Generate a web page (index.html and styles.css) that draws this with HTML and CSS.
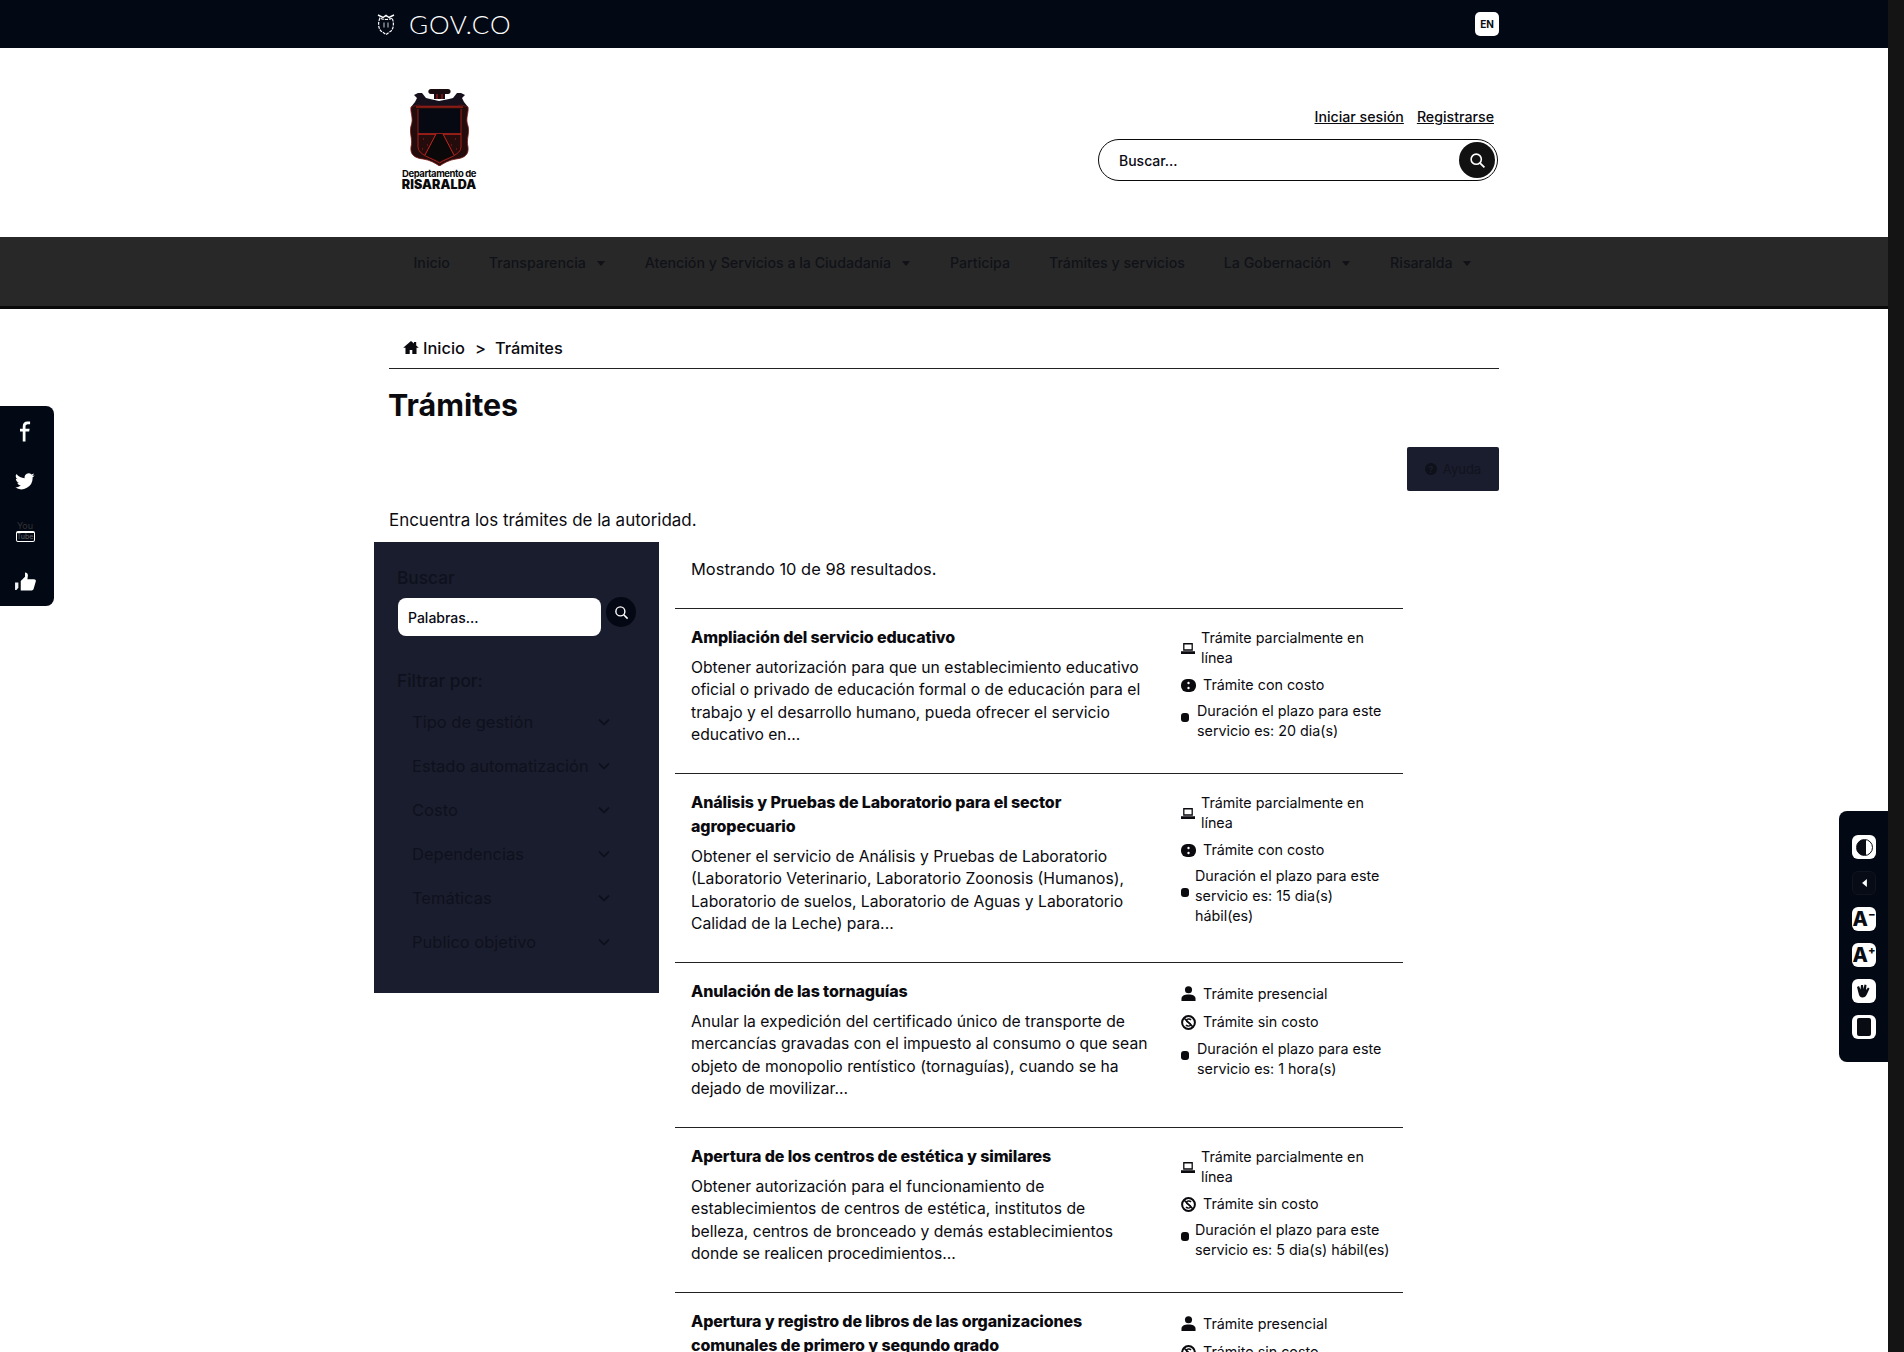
FILE: index.html
```html
<!DOCTYPE html>
<html lang="es">
<head>
    <meta charset="UTF-8" />
    <title>Trámites</title>
    <link rel="stylesheet" href="styles.css">
</head>
<body>
    <svg class="sprite" xmlns="http://www.w3.org/2000/svg">
        <symbol id="i-search" viewBox="0 0 16 16"><circle cx="6.8" cy="6.8" r="4.8" fill="none" stroke="currentColor" stroke-width="1.5"/><path d="M10.4 10.4 14.5 14.5" stroke="currentColor" stroke-width="1.7"/></symbol>
        <symbol id="i-chevron" viewBox="0 0 12 8"><path d="M1 1.5 6 6.5 11 1.5" fill="none" stroke="currentColor" stroke-width="1.8"/></symbol>
        <symbol id="i-caret" viewBox="0 0 10 6"><path d="M0 0h10L5 6z" fill="currentColor"/></symbol>
        <symbol id="i-laptop" viewBox="0 0 13 10"><path d="M2 0h9v7H2zM3.2 1.2v4.6h6.6V1.2zM0 7.6h13V10H0z" fill="currentColor" fill-rule="evenodd"/></symbol>
        <symbol id="i-cost" viewBox="0 0 15 13"><rect width="15" height="13" rx="6" fill="currentColor"/><circle cx="7.5" cy="4" r="1.2" fill="#fff"/><circle cx="7.5" cy="9" r="1.2" fill="#fff"/></symbol>
        <symbol id="i-nocost" viewBox="0 0 15 15"><circle cx="7.5" cy="7.5" r="6.4" fill="none" stroke="currentColor" stroke-width="2"/><path d="M3 3 12 12" stroke="currentColor" stroke-width="1.6"/><path d="M10 5C9 3.6 5.4 3.6 5.4 5.6S9.8 7.6 9.8 9.6 6 11.4 5 10" fill="none" stroke="currentColor" stroke-width="1.4"/></symbol>
        <symbol id="i-person" viewBox="0 0 15 16"><circle cx="7.5" cy="4" r="3.8" fill="currentColor"/><path d="M0 16v-2.500C0 10.500 3 9 7.500 9S15 10.500 15 13.500V16z" fill="currentColor"/></symbol>
        <symbol id="i-clock" viewBox="0 0 8 9"><rect width="8" height="9" rx="3" fill="currentColor"/></symbol>
    </svg>

    <div class="page">
        <div class="govbar">
            <div class="wrap govbar-inner">
                <a class="gov-logo" href="#">
                    <svg class="gov-shield" viewBox="0 0 18 22" fill="none" stroke="#fff">
                        <path d="M3 5C1 9 1 15 4 18L9 21.500 14 18C17 15 17 9 15 5 12 7 6 7 3 5z" stroke-width="1.200" stroke-dasharray="3 1"/>
                        <path d="M1 2 6 4.500 9 2.500 12 4.500 17 2" stroke-width="1.500"/>
                        <path d="M7 9.500v5M11 9.500v5" stroke-width=".8"/>
                    </svg>
                    <span class="gov-name">GOV.CO</span>
                </a>
                <a class="lang" href="#">EN</a>
            </div>
        </div>

        <header class="site-head">
            <div class="wrap site-head-inner">
                <a class="brand" href="#">
                    <svg class="brand-shield" viewBox="0 0 59 77">
                        <path d="M21 0h17c3.500 0 3.500 5 0 5h-3v5H24V5h-3c-3.500 0-3.500-5 0-5z" fill="#1a0d10"/>
                        <path d="M27 5v5M32 5v5" stroke="#b3201c" stroke-width="1.100"/>
                        <path d="M4 6 8 4 12 4 16 9 20 10 29 12 39 10 43 9 47 4 51 4 55 6 52 9 54 13 58 18H1L5 13 7 9z" fill="#15101c"/>
                        <path d="M1 18C5 17 8 15 11 17H48C51 15 54 17 58 18 59 24 55 29 58 37 60 44 56 50 58 58 59 66 54 69 46 70 39 71 34 74 29.500 77 25 74 20 71 13 70 5 69 0 66 1 58 3 50-1 44 1 37 4 29 0 24 1 18z" fill="#240c0c" stroke="#7a1814" stroke-width=".8"/>
                        <path d="M8 20H51V45H8z" fill="#070912"/>
                        <path d="M8 20V45H51V20" fill="none" stroke="#a81f1a" stroke-width=".9"/>
                        <path d="M6 18 53 18M8 45H51" stroke="#d0281f" stroke-width="1.100"/>
                        <path d="M8 45V58C8 66 22 69 29.500 74 37 69 51 66 51 58V45" fill="none" stroke="#a81f1a" stroke-width="1"/>
                        <path d="M26 45H33L44 66 29.500 72 15 66z" fill="#0a0808"/>
                        <path d="M26 45 15 66M33 45 44 66" stroke="#c4261f" stroke-width="1"/>
                        <path d="M13 50h1M17 56h1M45 50h1M41 56h1M12 60h1M46 60h1" stroke="#a81f1a" stroke-width="1.200"/>
                    </svg>
                    <span class="brand-small">Departamento de</span>
                    <span class="brand-big">RISARALDA</span>
                </a>
                <div class="head-tools">
                    <div class="head-links">
                        <a href="#">Iniciar sesión</a>
                        <a href="#">Registrarse</a>
                    </div>
                    <form class="head-search">
                        <input type="text" placeholder="Buscar..." />
                        <button type="button"><svg><use href="#i-search"/></svg></button>
                    </form>
                </div>
            </div>
        </header>

        <nav class="mainnav">
            <ul class="wrap mainnav-list">
                <li>Inicio</li>
                <li>Transparencia <svg><use href="#i-caret"/></svg></li>
                <li>Atención y Servicios a la Ciudadanía <svg><use href="#i-caret"/></svg></li>
                <li>Participa</li>
                <li>Trámites y servicios</li>
                <li>La Gobernación <svg><use href="#i-caret"/></svg></li>
                <li>Risaralda <svg><use href="#i-caret"/></svg></li>
            </ul>
        </nav>

        <main class="wrap">
            <div class="crumbs">
                <svg viewBox="0 0 24 20"><path d="M12 0 0 10.500h3.500V20H10v-6h4v6h6.500v-9.500H24L20 7V1.500h-3.500v2.500z" fill="currentColor"/></svg>
                <a href="#">Inicio</a>
                <span class="crumb-sep">&gt;</span>
                <span>Trámites</span>
            </div>
            <h1>Trámites</h1>
            <div class="help-row">
                <a class="help-btn" href="#"><span class="help-mark">?</span> Ayuda</a>
            </div>
            <p class="intro">Encuentra los trámites de la autoridad.</p>

            <div class="content">
                <aside class="filters">
                    <div class="filters-title">Buscar</div>
                    <div class="filters-search">
                        <input type="text" placeholder="Palabras..." />
                        <button type="button"><svg><use href="#i-search"/></svg></button>
                    </div>
                    <div class="filters-title filters-by">Filtrar por:</div>
                    <ul class="filter-list">
                        <li>Tipo de gestión <svg><use href="#i-chevron"/></svg></li>
                        <li>Estado automatización <svg><use href="#i-chevron"/></svg></li>
                        <li>Costo <svg><use href="#i-chevron"/></svg></li>
                        <li>Dependencias <svg><use href="#i-chevron"/></svg></li>
                        <li>Temáticas <svg><use href="#i-chevron"/></svg></li>
                        <li>Publico objetivo <svg><use href="#i-chevron"/></svg></li>
                    </ul>
                </aside>

                <section class="results">
                    <p class="results-count">Mostrando 10 de 98 resultados.</p>

                    <article class="item">
                        <div class="item-main">
                            <h3>Ampliación del servicio educativo</h3>
                            <p>Obtener autorización para que un establecimiento educativo<br>oficial o privado de educación formal o de educación para el<br>trabajo y el desarrollo humano, pueda ofrecer el servicio<br>educativo en...</p>
                        </div>
                        <ul class="item-meta">
                            <li class="m-online"><svg><use href="#i-laptop"/></svg><span>Trámite parcialmente en<br>línea</span></li>
                            <li class="m-cost"><svg><use href="#i-cost"/></svg><span>Trámite con costo</span></li>
                            <li class="m-time"><svg><use href="#i-clock"/></svg><span>Duración el plazo para este<br>servicio es: 20 dia(s)</span></li>
                        </ul>
                    </article>

                    <article class="item">
                        <div class="item-main">
                            <h3>Análisis y Pruebas de Laboratorio para el sector<br>agropecuario</h3>
                            <p>Obtener el servicio de Análisis y Pruebas de Laboratorio<br>(Laboratorio Veterinario, Laboratorio Zoonosis (Humanos),<br>Laboratorio de suelos, Laboratorio de Aguas y Laboratorio<br>Calidad de la Leche) para...</p>
                        </div>
                        <ul class="item-meta">
                            <li class="m-online"><svg><use href="#i-laptop"/></svg><span>Trámite parcialmente en<br>línea</span></li>
                            <li class="m-cost"><svg><use href="#i-cost"/></svg><span>Trámite con costo</span></li>
                            <li class="m-time m-time-long"><svg><use href="#i-clock"/></svg><span>Duración el plazo para este<br>servicio es: 15 dia(s)<br>hábil(es)</span></li>
                        </ul>
                    </article>

                    <article class="item">
                        <div class="item-main">
                            <h3>Anulación de las tornaguías</h3>
                            <p>Anular la expedición del certificado único de transporte de<br>mercancías gravadas con el impuesto al consumo o que sean<br>objeto de monopolio rentístico (tornaguías), cuando se ha<br>dejado de movilizar...</p>
                        </div>
                        <ul class="item-meta">
                            <li class="m-person"><svg><use href="#i-person"/></svg><span>Trámite presencial</span></li>
                            <li class="m-cost"><svg><use href="#i-nocost"/></svg><span>Trámite sin costo</span></li>
                            <li class="m-time"><svg><use href="#i-clock"/></svg><span>Duración el plazo para este<br>servicio es: 1 hora(s)</span></li>
                        </ul>
                    </article>

                    <article class="item">
                        <div class="item-main">
                            <h3>Apertura de los centros de estética y similares</h3>
                            <p>Obtener autorización para el funcionamiento de<br>establecimientos de centros de estética, institutos de<br>belleza, centros de bronceado y demás establecimientos<br>donde se realicen procedimientos...</p>
                        </div>
                        <ul class="item-meta">
                            <li class="m-online"><svg><use href="#i-laptop"/></svg><span>Trámite parcialmente en<br>línea</span></li>
                            <li class="m-cost"><svg><use href="#i-nocost"/></svg><span>Trámite sin costo</span></li>
                            <li class="m-time m-time-long"><svg><use href="#i-clock"/></svg><span>Duración el plazo para este<br>servicio es: 5 dia(s) hábil(es)</span></li>
                        </ul>
                    </article>

                    <article class="item">
                        <div class="item-main">
                            <h3>Apertura y registro de libros de las organizaciones<br>comunales de primero y segundo grado</h3>
                        </div>
                        <ul class="item-meta">
                            <li class="m-person"><svg><use href="#i-person"/></svg><span>Trámite presencial</span></li>
                            <li class="m-cost"><svg><use href="#i-nocost"/></svg><span>Trámite sin costo</span></li>
                        </ul>
                    </article>
                </section>
            </div>
        </main>

        <div class="social">
            <a href="#"><svg viewBox="0 0 12 22" class="s-f"><path d="M11 0H8C5 0 3 2 3 5.200V8H0v3h3v11h3V11h4l.5-3H6V5.500C6 4 7 3 8.500 3H11z" fill="#fff"/></svg></a>
            <a href="#"><svg viewBox="0 0 24 20" class="s-t"><path d="M23.500 2.400c-.9.400-1.800.6-2.800.8 1-.6 1.800-1.500 2.100-2.700-.9.600-2 1-3 1.200A4.800 4.800 0 0 0 11.600 6 13.500 13.500 0 0 1 1.700 1 4.800 4.800 0 0 0 3.200 7.400c-.8 0-1.500-.2-2.200-.6 0 2.300 1.600 4.300 3.800 4.700-.7.200-1.400.2-2.100.1.600 1.900 2.400 3.300 4.400 3.300A9.600 9.600 0 0 1 0 17 13.500 13.500 0 0 0 21.100 5c1-.7 1.800-1.600 2.400-2.600z" fill="#fff"/></svg></a>
            <a href="#" class="s-yt"><span class="s-yt-you">You</span><span class="s-yt-tube">Tube</span></a>
            <a href="#"><svg viewBox="0 0 22 20" class="s-l"><path d="M0 11h3.500v5.500L1.500 19H0z" fill="#fff" opacity=".95"/><path d="M6 9.500 10.500 5V.5c2 0 3.300 1.500 3 3.500l-.5 3.500H20c1.500 0 2.200 1.200 1.800 2.500l-2.300 8c-.3 1-1 1.500-2 1.500H6z" fill="#fff"/></svg></a>
        </div>

        <div class="access">
            <a href="#"><span class="a-contrast"></span></a>
            <a href="#" class="a-toggle"><svg viewBox="0 0 6 10"><path d="M6 0v10L0 5z" fill="#fff"/></svg></a>
            <a href="#" class="a-font">A<sup>−</sup></a>
            <a href="#" class="a-font">A<sup>+</sup></a>
            <a href="#"><svg viewBox="0 0 16 16" class="a-hand"><path d="M1 4 3 3 4.500 6.500 5 2l2 0 .5 4 1-4.500 2 .5-.5 5 2-2.500 1.500 1L11 11c-1 2.500-2.500 3.500-4.500 3.500S3 13 2.500 10z" fill="#0a0c14"/></svg></a>
            <a href="#"><span class="a-reader"></span></a>
        </div>
    </div>
    <div class="scrollbar"></div>
</body>
</html>
```

FILE: styles.css
```css
* {
    box-sizing: border-box;
}
html,
body {
    margin: 0;
    height: 100%;
}
body {
    display: flex;
    overflow: hidden;
    font-family: Inter, "Liberation Sans", sans-serif;
    font-size: 15px;
    color: #0a0a0f;
    background: #fff;
}
a {
    color: inherit;
    text-decoration: none;
}
ul {
    list-style: none;
    margin: 0;
    padding: 0;
}
input,
button {
    font-family: inherit;
}
.sprite {
    display: none;
}
.page {
    position: relative;
    flex: 1;
    min-width: 0;
    height: 1352px;
    overflow: hidden;
}
.scrollbar {
    width: 16px;
    background: #141414;
}
.wrap {
    width: 1110px;
    margin: 0 auto;
}

/* franja gov.co */
.govbar {
    height: 48px;
    background: #020814;
}
.govbar-inner {
    display: flex;
    align-items: center;
    justify-content: space-between;
    height: 48px;
}
.gov-logo {
    display: flex;
    align-items: center;
    margin-left: -12px;
    color: #fff;
}
.gov-shield {
    width: 18px;
    height: 22px;
}
.gov-name {
    margin-left: 14px;
    font-family: Lato, sans-serif;
    font-size: 26px;
    font-weight: 300;
    letter-spacing: 0.8px;
}
.lang {
    display: flex;
    align-items: center;
    justify-content: center;
    width: 24px;
    height: 24px;
    border-radius: 5px;
    background: #fff;
    color: #0a0c14;
    font-size: 10px;
    font-weight: 700;
}

/* cabecera */
.site-head {
    height: 189px;
}
.site-head-inner {
    display: flex;
    justify-content: space-between;
}
.brand {
    display: flex;
    flex-direction: column;
    align-items: center;
    margin: 41px 0 0 13px;
    width: 74px;
    color: #0a0a0a;
}
.brand-shield {
    width: 59px;
    height: 77px;
}
.brand-small {
    margin-top: 3px;
    font-size: 9.5px;
    line-height: 10px;
    font-weight: 700;
    letter-spacing: -0.45px;
    white-space: nowrap;
}
.brand-big {
    font-size: 12.5px;
    line-height: 12px;
    font-weight: 900;
    letter-spacing: 0.1px;
}
.head-tools {
    width: 400px;
    margin-right: 1px;
    padding-top: 59px;
}
.head-links {
    display: flex;
    justify-content: flex-end;
    gap: 13px;
    padding-right: 4px;
    font-size: 14.2px;
    line-height: 20px;
    font-weight: 500;
}
.head-links a {
    text-decoration: underline;
}
.head-search {
    display: flex;
    align-items: center;
    justify-content: space-between;
    height: 42px;
    margin-top: 12px;
    padding: 0 2px 0 20px;
    border: 1.5px solid #0a0a0a;
    border-radius: 21px;
}
.head-search input {
    flex: 1;
    border: none;
    outline: none;
    padding: 0;
    font-size: 14px;
    font-weight: 500;
}
.head-search input::placeholder {
    color: #0a0a14;
    opacity: 1;
}
.head-search button {
    display: flex;
    align-items: center;
    justify-content: center;
    width: 36px;
    height: 36px;
    padding: 0;
    border: none;
    border-radius: 50%;
    background: #111;
    color: #fff;
}
.head-search svg {
    width: 17px;
    height: 17px;
}

/* menu */
.mainnav {
    height: 72px;
    background: #282828;
    border-bottom: 3px solid #0a0a0a;
}
.mainnav-list {
    display: flex;
    padding: 16px 0 0 5px;
    color: #101218;
    font-size: 14.2px;
    line-height: 20px;
    font-weight: 500;
}
.mainnav-list li {
    display: flex;
    align-items: center;
    gap: 10px;
    padding: 0 19.5px;
    white-space: nowrap;
}
.mainnav-list svg {
    width: 10px;
    height: 5px;
}

/* migas y titulo */
.crumbs {
    display: flex;
    align-items: center;
    height: 60px;
    padding: 18px 0 0 14px;
    border-bottom: 1px solid #222;
    font-size: 16.4px;
    font-weight: 500;
    line-height: 20px;
}
.crumbs svg {
    width: 16px;
    height: 13px;
    margin-right: 4px;
}
.crumb-sep {
    margin: 0 9px 0 10px;
}
h1 {
    margin: 16px 0 0 -1px;
    font-size: 30.4px;
    line-height: 40px;
    font-weight: 700;
}
.help-row {
    display: flex;
    justify-content: flex-end;
    margin-top: 22px;
}
.help-btn {
    display: flex;
    align-items: center;
    justify-content: center;
    gap: 6px;
    width: 92px;
    height: 44px;
    border-radius: 2px;
    background: #1a1d2d;
    color: #11131f;
    font-size: 13px;
}
.help-mark {
    display: flex;
    align-items: center;
    justify-content: center;
    width: 12px;
    height: 12px;
    border-radius: 50%;
    background: #0e101a;
    color: #1a1d2d;
    font-size: 9px;
    font-weight: 700;
}
.intro {
    margin: 18px 0 11px;
    font-size: 16.95px;
    line-height: 22px;
    font-weight: 400;
}

/* columnas */
.content {
    display: grid;
    grid-template-columns: 285px 728px;
    gap: 16px;
    align-items: start;
    margin-left: -15px;
}
.filters {
    height: 451px;
    padding: 24px 23px 0;
    background: #1a1d2d;
    color: #0e111d;
}
.filters-title {
    font-size: 17.3px;
    line-height: 24px;
    font-weight: 500;
}
.filters-search {
    display: flex;
    align-items: flex-start;
    gap: 5px;
    margin-top: 8px;
}
.filters-search input {
    width: 203px;
    height: 38px;
    margin-left: 1px;
    padding: 0 10px;
    border: none;
    border-radius: 8px;
    outline: none;
    background: #fff;
    font-size: 14px;
    font-weight: 500;
}
.filters-search input::placeholder {
    color: #0a0a14;
    opacity: 1;
}
.filters-search button {
    display: flex;
    align-items: center;
    justify-content: center;
    width: 30px;
    height: 30px;
    margin-top: -1px;
    padding: 0;
    border: none;
    border-radius: 50%;
    background: #040814;
    color: #fff;
}
.filters-search svg {
    width: 15px;
    height: 15px;
}
.filters-by {
    margin-top: 33px;
}
.filter-list {
    margin-top: 7px;
    width: 213px;
}
.filter-list li {
    display: flex;
    align-items: center;
    justify-content: space-between;
    height: 44px;
    padding-left: 15px;
    font-size: 16.5px;
    white-space: nowrap;
}
.filter-list svg {
    width: 12px;
    height: 8px;
}

/* resultados */
.results-count {
    margin: 15px 0 27px 16px;
    font-size: 16.45px;
    line-height: 24px;
    font-weight: 400;
}
.item {
    display: grid;
    grid-template-columns: 490px 1fr;
    border-top: 1px solid #222;
    padding: 16px 0 0 16px;
}
.item-main {
    padding-bottom: 26.4px;
}
.item h3 {
    margin: 0 0 8px;
    font-size: 16px;
    line-height: 24px;
    font-weight: 800;
    letter-spacing: -0.12px;
}
.item p {
    margin: 0;
    font-size: 15.7px;
    line-height: 22.4px;
    white-space: nowrap;
}
.item-meta {
    display: flex;
    flex-direction: column;
    gap: 7px;
    padding-top: 3px;
    font-size: 14.3px;
    line-height: 20px;
    white-space: nowrap;
}
.item-meta li {
    display: flex;
    align-items: center;
}
.m-online svg {
    width: 14px;
    height: 11px;
    margin-right: 6px;
}
.m-cost svg,
.m-person svg {
    width: 15px;
    height: 15px;
    margin-right: 7px;
}
.m-person {
    min-height: 23px;
}
.m-time svg {
    width: 8px;
    height: 9px;
    margin: 0 8px 7px 0;
}
.m-time-long svg {
    margin-right: 6px;
}
.m-online ~ .m-time {
    margin-top: -1px;
}

/* barras flotantes */
.social {
    position: absolute;
    left: 0;
    top: 406px;
    display: flex;
    flex-direction: column;
    width: 54px;
    height: 200px;
    padding: 0;
    border-radius: 0 8px 8px 0;
    background: #020814;
    color: #fff;
}
.social a {
    display: flex;
    flex-direction: column;
    align-items: center;
    justify-content: center;
    width: 50px;
    height: 50px;
}
.s-f {
    width: 11px;
    height: 21px;
}
.s-t {
    width: 20px;
    height: 17px;
}
.s-l {
    width: 21px;
    height: 19px;
}
.s-yt-you {
    color: #333;
    font-size: 9px;
    line-height: 10px;
}
.s-yt-tube {
    width: 19px;
    height: 11px;
    border: 1px solid #fff;
    border-top-width: 2px;
    border-radius: 2px;
    color: #666;
    font-size: 7px;
    line-height: 8px;
    text-align: center;
}
.access {
    position: absolute;
    right: 0;
    top: 811px;
    display: flex;
    flex-direction: column;
    gap: 12px;
    width: 49px;
    height: 251px;
    padding: 24px 0 0 13px;
    border-radius: 8px 0 0 8px;
    background: #020814;
}
.access a {
    display: flex;
    align-items: center;
    justify-content: center;
    width: 24px;
    height: 24px;
    border-radius: 6px;
    background: #fff;
    color: #0a0c14;
}
.access .a-toggle {
    background: #060b16;
    border: 1px solid #10141e;
}
.a-toggle svg {
    width: 5px;
    height: 8px;
}
.a-contrast {
    width: 17px;
    height: 17px;
    border-radius: 50%;
    background: linear-gradient(90deg, #0a0c14 60%, #fff 60%);
    border: 1.5px solid #0a0c14;
}
.access .a-font {
    font-size: 20px;
    font-weight: 800;
    line-height: 24px;
    align-items: flex-start;
}
.a-font sup {
    font-size: 11px;
    line-height: 10px;
    font-weight: 800;
    margin-top: 2px;
}
.a-hand {
    width: 16px;
    height: 16px;
}
.a-reader {
    width: 14px;
    height: 18px;
    border-radius: 2px;
    background: #0a0c14;
}
```
